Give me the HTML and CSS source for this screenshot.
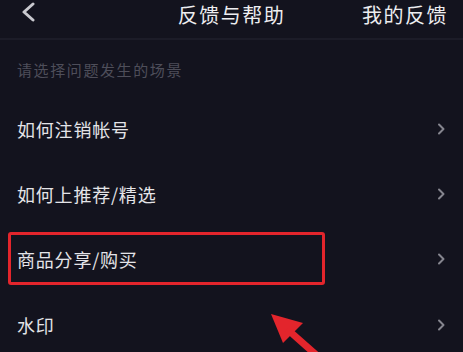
FILE: index.html
```html
<!DOCTYPE html>
<html lang="zh-CN">
<head>
<meta charset="utf-8">
<title>反馈与帮助</title>
<link rel="stylesheet" href="styles.css">
</head>
<body>
<div class="screen">
  <header class="topbar">
    <div class="back">
      <svg width="16" height="22" viewBox="0 0 16 22"><polyline points="12,2 3,10 12,18" fill="none" stroke="#c9c9cf" stroke-width="3" stroke-linecap="round" stroke-linejoin="round"/></svg>
    </div>
    <div class="title">反馈与帮助</div>
    <div class="action">我的反馈</div>
  </header>
  <div class="hint">请选择问题发生的场景</div>
  <ul class="list">
    <li class="row"><span>如何注销帐号</span><svg class="chev" width="8" height="12" viewBox="0 0 8 12"><polyline points="2,1.5 6.5,6 2,10.5" fill="none" stroke="#85858e" stroke-width="2" stroke-linecap="round" stroke-linejoin="round"/></svg></li>
    <li class="row"><span>如何上推荐/精选</span><svg class="chev" width="8" height="12" viewBox="0 0 8 12"><polyline points="2,1.5 6.5,6 2,10.5" fill="none" stroke="#85858e" stroke-width="2" stroke-linecap="round" stroke-linejoin="round"/></svg></li>
    <li class="row marked"><span>商品分享/购买</span><svg class="chev" width="8" height="12" viewBox="0 0 8 12"><polyline points="2,1.5 6.5,6 2,10.5" fill="none" stroke="#85858e" stroke-width="2" stroke-linecap="round" stroke-linejoin="round"/></svg><div class="mark-box"></div></li>
    <li class="row"><span>水印</span><svg class="chev" width="8" height="12" viewBox="0 0 8 12"><polyline points="2,1.5 6.5,6 2,10.5" fill="none" stroke="#85858e" stroke-width="2" stroke-linecap="round" stroke-linejoin="round"/></svg></li>
  </ul>
  <svg class="arrow" width="70" height="47" viewBox="260 305 70 47">
    <polygon points="271,314 303,323 283,343" fill="#e3252c"/>
    <line x1="287" y1="329" x2="322" y2="360" stroke="#e3252c" stroke-width="7"/>
  </svg>
</div>
</body>
</html>
```
FILE: styles.css
```css
html, body {
  margin: 0;
  padding: 0;
  background: #13131e;
}
.screen {
  position: relative;
  width: 463px;
  height: 352px;
  overflow: hidden;
  background: #13131e;
  font-family: "Noto Sans CJK SC", "Noto Sans", sans-serif;
  color: #e4e4e8;
}
.topbar {
  display: grid;
  grid-template-columns: 1fr auto 1fr;
  align-items: start;
  height: 38px;
  border-bottom: 2px solid #1c1c28;
  box-sizing: content-box;
}
.back {
  padding: 2px 0 0 21px;
  display: flex;
}
.title {
  font-size: 20px;
  line-height: 29px;
  letter-spacing: 1.5px;
  color: #ededf0;
}
.action {
  justify-self: end;
  padding-right: 15px;
  font-size: 20px;
  line-height: 29px;
  letter-spacing: 1.5px;
  color: #ededf0;
}
.hint {
  margin-top: 19px;
  padding-left: 17px;
  font-size: 15px;
  line-height: 22px;
  letter-spacing: 1.6px;
  color: #4e4e5a;
}
.list {
  list-style: none;
  margin: 15px 0 0;
  padding: 0;
}
.row {
  position: relative;
  height: 65.4px;
  display: flex;
  align-items: center;
  justify-content: space-between;
  padding: 0 18px 0 17px;
  font-size: 18px;
  letter-spacing: 0.8px;
  color: #e4e4e8;
}
.chev {
  display: block;
}
.mark-box {
  position: absolute;
  left: 8px;
  top: 5px;
  width: 317px;
  height: 53px;
  box-sizing: border-box;
  border: 3px solid #e3252c;
  border-radius: 3px;
}
.arrow {
  position: absolute;
  left: 260px;
  top: 305px;
}
```
